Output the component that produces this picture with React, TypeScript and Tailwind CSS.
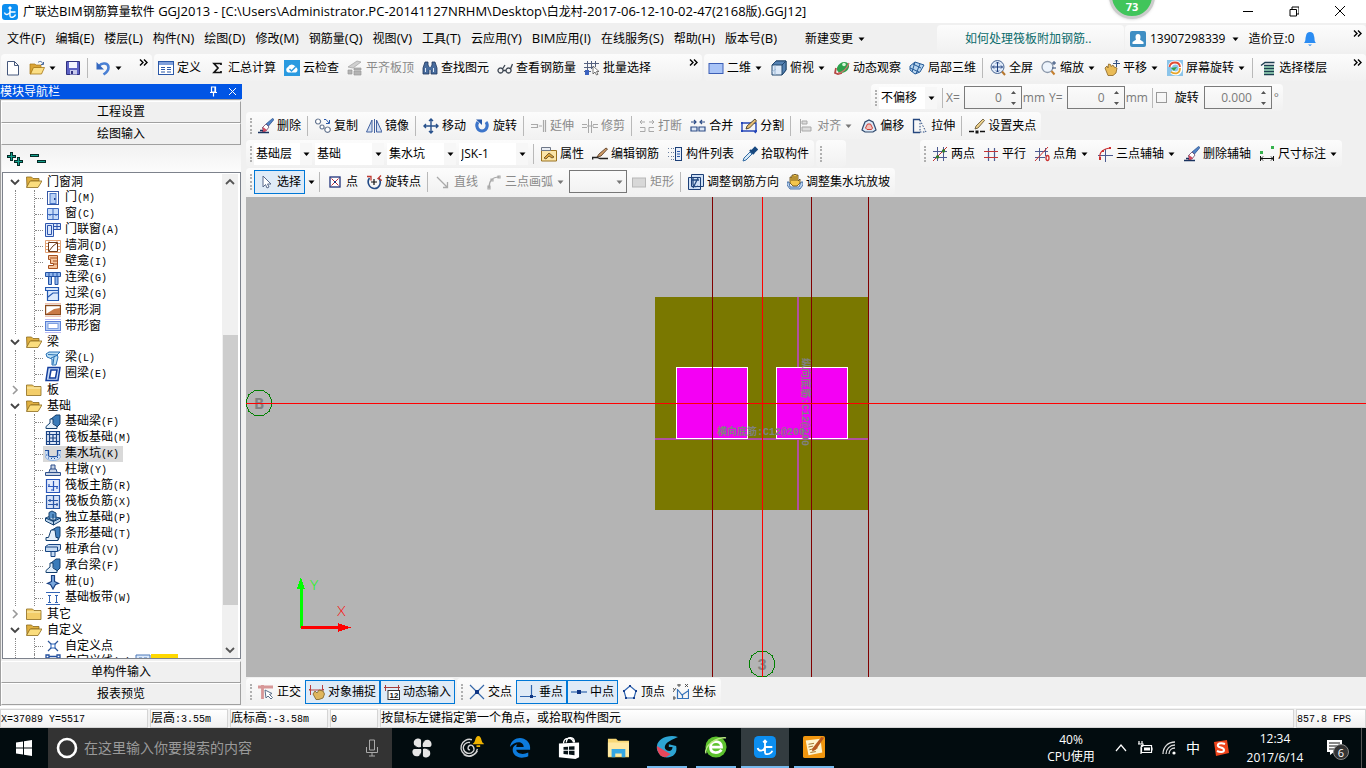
import type { ReactNode } from "react";
import { clsx } from "clsx";

const B = "#2a58a8";
const N = "#1c3f77";
const G = "#a9a9a9";

const icons: Record<string, ReactNode> = {
  app: (
    <>
      <rect width="16" height="16" rx="3" fill="#0c8ef0" />
      <path d="M8 3v9.500M6.500 4.500L8 3l1.500 1.500M2.500 8.500c.5 3 4.500 2.500 5.500-.5h5.500M8 12.500c1.500 1.500 5 .5 5.500-2" fill="none" stroke="#fff" strokeWidth="1.400" />
    </>
  ),
  file: <path d="M2.500 1.500h7l4 4v9.500h-11zM9.500 1.500v4h4" fill="#fff" stroke="#46587c" />,
  open: (
    <>
      <path d="M1 4h5l1 1h5v3H5l-3 6H1z" fill="#d9a436" stroke="#a67614" strokeWidth=".7" />
      <path d="M4.500 7.500h11L12.500 14h-11z" fill="#fbdf86" stroke="#a67614" strokeWidth=".8" />
      <path d="M9 2.500c2-2 4-1 5 1.500M14.500 2v2.500H12" fill="none" stroke="#47689c" />
    </>
  ),
  save: (
    <>
      <path d="M1.500 1.500h13v13h-13z" fill="#5d62c4" stroke="#30317f" />
      <path d="M4 2h8v6H4z" fill="#f3f4ff" />
      <path d="M5 10h7v4.500H5z" fill="#c8caec" />
      <path d="M6 11h2v3H6z" fill="#30317f" />
    </>
  ),
  undo: (
    <>
      <path d="M4 6C7 2 13.500 3 13.500 7.500c0 3-2 5-5 7" fill="none" stroke="#4a80d4" strokeWidth="2.600" />
      <path d="M1.500 2v7.500H9z" fill="#3468c0" />
    </>
  ),
  define: (
    <>
      <rect x=".5" y="1.500" width="15" height="13" fill="#fff" stroke={B} />
      <path d="M1 2h14v3H1z" fill="#7e9fdb" />
      <path d="M3 7.500h4M3 9.500h4M3 12h4M9 7.500h4M9 9.500h4M9 12h4" stroke={B} />
    </>
  ),
  sigma: <path d="M12 5V3.500H5L9 8l-4 4.500h7V11" fill="none" stroke="#111" strokeWidth="1.700" />,
  cloud: (
    <>
      <rect width="16" height="16" fill="#2a9ae0" />
      <path d="M4 12.500a3 3 0 0 1 0-5.500 4 4 0 0 1 7.500 0 3 3 0 0 1 .5 5.500z" fill="#fff" />
      <path d="M5.500 9l2 2 4-4" fill="none" stroke="#2a9ae0" strokeWidth="1.500" />
    </>
  ),
  align: (
    <>
      <path d="M1 7l9-6 4 1-8 6z" fill="#d0d0d0" stroke="#a0a0a0" strokeWidth=".7" />
      <path d="M1 10h4v4H1zM7 8h7v2H7zM7 11h7v4H7z" fill="#b4b4b4" stroke="#9a9a9a" strokeWidth=".7" />
    </>
  ),
  find: (
    <>
      <path d="M3 2h3v3l1 2v7H1V8zM10 2h3l2 6v6H9V7l1-2z" fill="#486c9d" stroke="#1e355c" strokeWidth=".8" />
      <path d="M6 7h4v3H6z" fill="#486c9d" />
      <path d="M3.500 8v4M11.500 8v4" stroke="#dbe6f5" />
    </>
  ),
  glasses: <path d="M3.500 8a2.500 2.500 0 1 0 .1 0M11.500 8a2.500 2.500 0 1 0 .1 0M6 10.500h3M5.500 9L8 5M13.500 9L15.500 4" fill="none" stroke="#3b4450" strokeWidth="1.300" />,
  batch: (
    <>
      <path d="M0 3.500h15M0 7.500h10M3.500 1v14M7.500 1v8M11.500 1v6M0 11.500h7" stroke="#54607e" />
      <path d="M1 10h4v5H1z" fill="#3b62bf" />
      <path d="M9 6v8l2-2 1.500 3 1.500-.7-1.500-2.800H15z" fill="#fff" stroke="#444" strokeWidth=".7" />
    </>
  ),
  plan: <rect x="1" y="3.500" width="14" height="10" fill="#a9c4f7" stroke="#3c5fb6" />,
  cube: (
    <>
      <path d="M1 5l4-4h10v9l-4 5H1z" fill="#dce9f8" stroke="#21466d" />
      <path d="M1 5l4-4h10l-4 4zM11 5l4-4v9l-4 5z" fill="#5481b2" stroke="#21466d" />
      <path d="M4 5v10M1 12l4-3" stroke="#9bb6d3" />
    </>
  ),
  orbit: (
    <>
      <path d="M2 8l-1 5 3 1 4-1" fill="none" stroke="#b54a45" strokeWidth="1.800" />
      <ellipse cx="9" cy="7.500" rx="6.500" ry="5" transform="rotate(-35 9 7.500)" fill="#2da14b" />
      <circle cx="10" cy="4.500" r="1.800" fill="#d5f5d6" />
      <path d="M4 13c4 0 9-4 11-10" fill="none" stroke="#c9746c" strokeWidth="1.300" />
    </>
  ),
  local3d: (
    <>
      <path d="M1 6l5-4 9 3-4 7-5 2-5-4z" fill="#b8d5ef" stroke="#255b98" />
      <path d="M4 4l8 4M1 8l9 4M6 2L3 12M11 4L7 14" stroke="#255b98" fill="none" />
    </>
  ),
  full: (
    <>
      <circle cx="7.500" cy="7" r="6.500" fill="#dfeaf9" stroke="#4a6794" />
      <path d="M7.500 2v10M2.500 7h10M6 3.500L7.500 2 9 3.500M6 10.500L7.500 12 9 10.500M4 5.500L2.500 7 4 8.500M11 5.500L12.500 7 11 8.500" fill="none" stroke="#1e3f7d" />
      <path d="M12 11.500l3 3.500" stroke="#b5762c" strokeWidth="2" />
    </>
  ),
  zoom: (
    <>
      <circle cx="6.500" cy="7" r="5.500" fill="#edf4fc" stroke="#8b98aa" strokeWidth="1.300" />
      <path d="M10.500 11l3 3.500" stroke="#c5802f" strokeWidth="2" />
      <path d="M11 3h4M13 1v4M11 8h4" stroke="#2d4976" />
    </>
  ),
  pan: (
    <>
      <path d="M1 8l2-2 1 2 .5-4 2 .500.5 2L9 5l1 2 3 1-1 5-3 2.500H4z" fill="#e9bb57" stroke="#8a6524" strokeWidth=".8" />
      <path d="M12.500 0v7M9 3.500h7M11 1.500L12.500 0 14 1.500" stroke="#33517f" fill="none" />
    </>
  ),
  rotateScreen: (
    <>
      <rect width="16" height="16" fill="#8cc5ea" />
      <path d="M3 7c1-6 10-6 10.500 0s-4 8-9 5" fill="none" stroke="#fff" strokeWidth="4" />
      <path d="M2.500 7c1-6 10-6 10.500 0" fill="none" stroke="#e04b32" strokeWidth="1.800" />
      <path d="M13 8c0 5-4 7-9 4" fill="none" stroke="#e7a52b" strokeWidth="1.800" />
      <path d="M4 8l6-1-3 4z" fill="#37a445" />
    </>
  ),
  floors: (
    <>
      <path d="M1 5.500L5 2.500h9.500M4 14.500h10M4 11.500h10M4 8.500h10M4 5.500h10" fill="none" stroke="#1d3e51" strokeWidth="1.300" />
      <path d="M4 7h10M4 10h10M4 13h10" stroke="#3ca578" />
    </>
  ),
  erase: (
    <>
      <path d="M14.500.5l1.500 1L10.500 8 8 6z" fill="#5183c7" stroke="#234a86" strokeWidth=".7" />
      <path d="M8 6l3 3-3 4-4-3z" fill="#fff" stroke="#65446a" strokeWidth=".8" />
      <path d="M5 9l4 3-2 2H4z" fill="#d04c61" />
      <path d="M0 14.500h11M2 12.500h3" stroke="#1a335f" strokeWidth="1.300" />
    </>
  ),
  copy: (
    <>
      <path d="M3 1a2.500 2.500 0 1 0 .1 0M7 7a2 2 0 1 0 .1 0M12.500 9a2.700 2.700 0 1 0 .1 0" fill="#fff" stroke="#65758f" strokeWidth="1.200" />
      <path d="M9 1.500h2l3 3.500M14.500 2v3.500H11" fill="none" stroke={B} />
    </>
  ),
  mirror: <path d="M6 2v12H.500zM10.500 2v12h5.500zM8.500 1v14" fill="#d5e1f4" stroke="#4362a0" />,
  move: <path d="M8 1v14M1 8h14M6 3l2-2 2 2M6 13l2 2 2-2M3 6L1 8l2 2M13 6l2 2-2 2" fill="none" stroke="#27508b" strokeWidth="1.400" />,
  rotate: (
    <>
      <path d="M4 4C1 8 4 13 8 13s7-5 4-9" fill="none" stroke="#3d75ca" strokeWidth="3" />
      <path d="M2 1.500h6v5.500z" fill="#2557a9" />
    </>
  ),
  extend: <path d="M0 6.500h6M0 9.500h6M6.500 6v4M8 8h3M12.500 2v12M14.500 2v12" fill="none" stroke={G} strokeWidth="1.200" />,
  trim: <path d="M0 6.500h5M0 9.500h5M11 6.500h5M11 9.500h5M6.500 1v14M9.500 3v12M5 8h7" fill="none" stroke={G} />,
  breakIt: <path d="M1 4h5M3 2L1 4l2 2M15 4h-5M13 2l2 2-2 2M1 9.500h5v4H1M15 9.500h-5v4h5" fill="none" stroke={G} />,
  merge: <path d="M1 4h5M4 2l2 2-2 2M15 4h-5M12 2l-2 2 2 2M1 9h6v4H1zM9 9h6v4H9z" fill="#dce6f5" stroke="#2e4d86" strokeWidth="1.200" />,
  split: (
    <>
      <path d="M1 5v8h14V5zM1 5h2M13 13l2 2" fill="none" stroke="#2446b8" strokeWidth="1.400" />
      <path d="M5 11l1-3 8-7 1.500 2-7 7z" fill="#e5bd73" stroke="#30291b" strokeWidth=".8" />
      <path d="M0 4h2v2H0zM0 12h2v2H0zM14 12h2v2h-2z" fill="#2446b8" />
    </>
  ),
  alignTo: <path d="M2.500 1v14M4 3h5v3H4zM4 9h9v4H4z" fill="#ddd" stroke={G} />,
  offset: (
    <>
      <path d="M2 9l2-5 4-2 4 2 2 5 1 3-3 2H4l-3-2z" fill="#dce9f7" stroke="#2f486d" strokeWidth="1.200" />
      <path d="M4.500 10l2-4h3l2 4-1 1.500H6z" fill="#f3c1bc" stroke="#d04035" />
    </>
  ),
  stretch: (
    <>
      <path d="M8 1.500H1.500v13H8" fill="none" stroke="#25477e" strokeWidth="1.300" />
      <path d="M8 2l6 12H8z" fill="none" stroke="#25477e" strokeDasharray="1.500 1.500" />
    </>
  ),
  grip: (
    <>
      <path d="M0 13.500h5M11 13.500h5" stroke="#111" strokeWidth="1.300" />
      <path d="M6.500 12.500h3v3h-3z" fill="#111" />
      <path d="M6 11l1-3 7-7 1.500 1.500L9 10z" fill="#ecd08b" stroke="#5c4b28" strokeWidth=".8" />
    </>
  ),
  props: (
    <>
      <path d="M.5 4.500h15V15H.5z" fill="#fbe5a7" stroke="#9a7220" />
      <path d="M.5 1.500h9v3h-9z" fill="#e8ecf2" stroke="#6e7787" />
      <path d="M3 12l5-5 5 4-2 1-3-2-3 3z" fill="#dca43a" stroke="#5e451c" strokeWidth=".8" />
    </>
  ),
  rebar: (
    <>
      <path d="M0 11.500h5l3 1h8M0 11.500l1 2" fill="none" stroke="#222" strokeWidth="1.300" />
      <path d="M5 11l2-3 7-6 1.500 1L9 10z" fill="#d09d68" stroke="#4d301b" strokeWidth=".8" />
    </>
  ),
  list: (
    <>
      <rect x="8.500" y="1.500" width="6" height="13" fill="#e5edf9" stroke={N} />
      <path d="M10 5.500h3M10 8h3M10 10.500h3" stroke={B} />
      <path d="M1 2.500h2M1 6.500h2M1 10.500h2M4 2.500h3M4 6.500h3M4 10.500h3M4 13.500h3" stroke="#6a7f9f" strokeDasharray="1 1" />
    </>
  ),
  picker: (
    <>
      <path d="M8 4l4 4M9.500 5.500L13 2l1.500 1.500-3.500 3.500" fill="#1f5ca6" stroke="#17487f" strokeWidth="2.400" />
      <path d="M8 6l2 2-6 6-3 1 1-3z" fill="#d7e9f7" stroke="#336ba3" />
    </>
  ),
  twoPoint: (
    <>
      <path d="M5.500 1v14M11.500 1v14M1 5.500h14M1 11.500h14" stroke="#4c5a90" />
      <path d="M1 15L15 1" stroke="#c32f2f" />
      <circle cx="5.500" cy="11" r="1.700" fill="#327c2c" />
      <circle cx="11.500" cy="5" r="1.700" fill="#327c2c" />
    </>
  ),
  parallel: (
    <>
      <path d="M5.500 2v13M11.500 2v13" stroke="#4c5a90" strokeWidth="1.200" />
      <path d="M1 5.500h14M1 11.500h14" stroke="#c33535" strokeWidth="1.200" />
    </>
  ),
  pointAngle: (
    <>
      <path d="M5.500 2v13M11.500 2v8M1 5.500h13M1 11.500h10" stroke="#4c5a90" />
      <path d="M1 15L14 1" stroke="#c93030" />
      <ellipse cx="13.500" cy="12" rx="1.500" ry="2.500" fill="none" stroke="#c93030" strokeWidth="1.300" />
    </>
  ),
  threePoint: (
    <>
      <path d="M8.500 3v13M1 9.500h15" stroke="#4c5a90" />
      <path d="M3 12C2 6 6 3 13 2" fill="none" stroke="#cf3030" strokeWidth="1.200" />
      <path d="M2 11h2v3H2zM5 4h2v2H5zM12 1h2v2h-2z" fill="#cf3030" />
    </>
  ),
  dimension: (
    <>
      <path d="M1 5h3v3H1zM12 0h3v3h-3z" fill="#36b14c" />
      <path d="M1.500 10v5M14.500 10v5M2 12.500h12M4 10.500l-2 2 2 2M12 10.500l2 2-2 2" fill="none" stroke="#111" />
    </>
  ),
  select: <path d="M5 2v11l2.500-2.500L9 14l2-1-1.500-3H13z" fill="#fff" stroke="#58698a" />,
  point: (
    <>
      <rect x="3" y="3" width="10" height="10" fill="#fff" stroke="#1f327a" strokeWidth="1.300" />
      <path d="M4.500 4.500l7 7M11.500 4.500l-7 7" stroke="#c22f3a" />
      <path d="M7 7h2v2H7z" fill="#1f327a" />
    </>
  ),
  rotPoint: (
    <>
      <path d="M3.500 4c-3 4-.5 10 4.500 10.500S16 9 13 4" fill="none" stroke="#234b87" strokeWidth="1.600" />
      <path d="M1 2.500h4v4M15 1.500l-3 3 4 2" fill="none" stroke="#c03b32" strokeWidth="1.300" />
      <path d="M8 5v6M5 8h6" stroke="#111" strokeWidth="1.200" />
    </>
  ),
  line: <path d="M2 3l10 10M12.500 8v5.500H8" fill="none" stroke={G} strokeWidth="1.300" />,
  arc: <path d="M3 14C3 7 6 3 13 3M2 12h2v3H2zM5 5h2v2H5zM12 2h2v2h-2z" fill="none" stroke={G} strokeWidth="1.200" />,
  rectangle: <rect x="1.500" y="4" width="13" height="9" fill="#d8d8d8" stroke="#b8b8b8" />,
  rebarDir: (
    <>
      <path d="M3.500.500h12v12h-12zM.500 3.500h12v12H.500z" fill="#cfe0f5" stroke={N} />
      <path d="M3 6h8M5 4v6c0 3 3 3 5 2M10 4L5 14" fill="none" stroke="#244b83" strokeWidth="1.300" />
    </>
  ),
  slope: (
    <>
      <path d="M0 8h2l1 5h9l2-5h2v3l-3 4H3l-3-4z" fill="#bcd4ef" stroke="#2a5998" strokeWidth=".8" />
      <path d="M3 9V3h2V1h2V.5h2V1h2v6l2-2v4l-3 3H6z" fill="#f3c64d" stroke="#5b4310" strokeWidth=".8" />
      <path d="M5 3v4M7 2v5M9 2v5" stroke="#5b4310" strokeWidth=".8" />
    </>
  ),
  ortho: (
    <>
      <path d="M0 3h15M4.500 1v14" stroke="#d79797" strokeWidth="2.800" />
      <path d="M7 6l1 8 2-2 3 3 1.500-1.500-3-3 2.500-1z" fill="#fff" stroke="#5b6f88" />
    </>
  ),
  snap: (
    <>
      <path d="M1.500 1v10M13.500 1v5M0 6h15M0 6l2-2M15 6l-2-2" stroke="#b94040" />
      <path d="M4 10l2-3 2 2 2-3 4 1 1.500 3-1.500 4-4 1.500H7z" fill="#dfb65d" stroke="#7a6027" strokeWidth=".8" />
    </>
  ),
  dynInput: (
    <>
      <path d="M0 3.500h16M1.500 1v6M14.500 1v6" stroke="#a63c3c" />
      <rect x="4" y="6.500" width="11.500" height="9" fill="#fff" stroke="#333" />
      <text x="5.500" y="14" fontSize="8" fontWeight="bold" fontFamily="Liberation Sans" fill="#111">12</text>
    </>
  ),
  cross: (
    <>
      <path d="M1 1l14 14M15 1L1 15" stroke="#3667a9" strokeWidth="1.200" />
      <path d="M6 6h4v4H6z" fill="#0f3684" />
    </>
  ),
  perp: (
    <>
      <path d="M0 12.500h16M11.500 1v12" stroke="#2f65ad" strokeWidth="1.200" />
      <path d="M10 11h3v3h-3z" fill="#0f3684" />
    </>
  ),
  mid: (
    <>
      <path d="M0 8h16" stroke="#2f65ad" strokeWidth="1.200" />
      <path d="M6 6h4v4H6z" fill="#0f3684" />
    </>
  ),
  vertex: (
    <>
      <path d="M8 2L2 7l2 7h8l2-7z" fill="#fff" stroke="#3166b2" strokeWidth="1.200" />
      <path d="M7 1h2v2H7zM1 6h2v2H1zM13 6h2v2h-2zM3 13h2v2H3zM11 13h2v2h-2z" fill="#173f8e" />
    </>
  ),
  coord: (
    <>
      <path d="M4.500 5v9.500h11M15.500 5v10M5 6l4 5 6-4M9.500 11v4" fill="none" stroke="#3472b9" strokeWidth="1.200" />
      <path d="M5 0h2v2H5zM12 0l3 3M15 0l-3 3M0 4l1.500 2M3 4L0 8M0 13h2v2H0z" fill="none" stroke="#444" strokeWidth=".9" />
    </>
  ),
  folderOpen: (
    <>
      <path d="M.5 3h5l1.500 1.500h6V7H5l-4 6z" fill="#e0b040" stroke="#8c6a1c" strokeWidth=".8" />
      <path d="M4 7h12l-4 6.500H.5z" fill="#fbdd7d" stroke="#8c6a1c" strokeWidth=".8" />
    </>
  ),
  folder: (
    <>
      <path d="M.5 3h6L8 4.500h7v9H.5z" fill="#f3cd69" stroke="#8c6a1c" strokeWidth=".8" />
      <path d="M1 6h13.500" stroke="#fdf0b9" />
    </>
  ),
  door: (
    <>
      <rect x="2.500" y="1.500" width="11" height="13" fill="#fff" stroke="#3558a5" />
      <rect x="5" y="3.500" width="6" height="10" fill="#b9d1f6" stroke="#4b78c8" />
      <path d="M9 8h1.500v2H9z" fill="#1a3f8f" />
    </>
  ),
  window: <path d="M2.500 2.500h11v11h-11zM8 2v12M2 8.500h12M5 8v2M11 8v2" fill="#c7dcfa" stroke="#3c68bd" />,
  doorWin: <path d="M.5 1.500h8v13h-8zM2.500 3.500h4v9h-4zM8.500 1.500h7v6h-7zM12 1.500v6M8.500 4.500h7" fill="#dae7fc" stroke="#2d55ad" />,
  wallHole: (
    <>
      <path d="M.5 2.500h15v12H.5zM.5 5.500h15M.5 8.500h15M.5 11.500h15M4 2v12M12 2v12" fill="#fff" stroke="#e3a173" />
      <path d="M3.500 4.500h9v9h-9z" fill="#fff" stroke="#6e3a18" />
      <path d="M4 13l4-5 4-3" fill="none" stroke="#6e3a18" />
    </>
  ),
  niche: <path d="M3.500 1.500h9v13h-9v-3h5v-2h-3v-4h-2zM5 4h7M8 7h4M8 10h4" fill="#f7c59c" stroke="#a5501f" />,
  linkBeam: <path d="M.5 2.500h15v4H.5zM3.500 6.500h3v8h-3zM10 6.500h3v8h-3zM4 3v3M8 3v3M12 3v3" fill="#8fb6ee" stroke="#2352a4" />,
  lintel: <path d="M.5 1.500h13v3H.500zM2.500 4.500h11v10h-11zM3 11l5-4h5" fill="#dbe9fc" stroke="#2458b0" strokeWidth="1.200" />,
  stripHole: (
    <>
      <rect x=".5" y="3.500" width="15" height="9" fill="#fff" stroke="#8a4a1d" strokeWidth="1.400" />
      <path d="M1 12l8-5 6-1v6z" fill="#c87a48" />
      <path d="M0 1.500h16M0 14.500h16" stroke="#f0c3b4" />
    </>
  ),
  stripWin: (
    <>
      <path d="M0 1.500h16M0 14.500h16" stroke="#b9b9f2" />
      <rect x=".5" y="3.500" width="15" height="9" fill="#b8cff5" stroke="#5a80d5" />
      <rect x="3" y="5.500" width="10" height="5" fill="#fff" stroke="#7fa0e2" />
    </>
  ),
  beam: <path d="M1 4l3-2h11l-3 3 1 2-2 8H7V9L2 7zM3 4.500l9 .5M6 8l7-3M9 7l-1 7" fill="#bde1f6" stroke="#276fb4" />,
  ringBeam: <path d="M3 1.500h12L13 14.500H1zM6 4h6l-1.500 8H4.500z" fill="#c9dcf8" stroke="#143f9d" strokeWidth="1.500" fillRule="evenodd" />,
  baseBeam: (
    <>
      <path d="M6 5l5-4h4v9l-4 4" fill="#3a7bb9" stroke="#14406f" />
      <path d="M1 14.500v-2L5 9V5h3v5l4 2.500v2z" fill="#e2effb" stroke="#14406f" />
    </>
  ),
  raft: <path d="M1.500 1.500h13v13h-13zM4.500 1v14M11.500 1v14M1 4.500h14M1 11.500h14M8 4v8M4 8h8" fill="#dfe9f8" stroke="#1b4486" strokeWidth="1.200" />,
  sump: (
    <>
      <path d="M0 4.500h3v5c0 2 10 2 10 0v-5h3v4c0 4-3 6-8 6s-8-2-8-6z" fill="#d3e3f6" stroke="#8db0de" />
      <path d="M0 4.500h3.500v5c0 1.500 9 1.500 9 0v-5H16" fill="none" stroke="#1e4fa0" strokeWidth="1.200" />
      <path d="M1 9h1M3 12h1M6 12.500h1M9 12.500h1M12 11.500h1M14 9h1" stroke="#1e4fa0" />
    </>
  ),
  pier: <path d="M.5 10.500h15v3H.500zM4 10l1-3h6l1 3M6 7V3h4v4" fill="#c8d3e4" stroke="#2c4f8c" />,
  mainBar: <path d="M1.500 1.500h13v13h-13zM3 8.500h10M8.500 3v10M4 6v3M12 8v3M6 12h3" fill="#e4ecfc" stroke="#2a57bb" strokeWidth="1.200" />,
  negBar: <path d="M1.500 1.500h13v13h-13zM3 6.500h10M3 10.500h10M8.500 2v12M5 5v3M12 9v3" fill="#d6e2f8" stroke="#2a57a6" strokeWidth="1.200" />,
  isolated: (
    <>
      <path d="M.5 8l5-2 10 2v3l-7 4-8-4z" fill="#b8d3ec" stroke="#14406f" />
      <path d="M4 8V2.500L7 1l4 2v6l-3 2zM.500 8l8 3.500 7-3.500M8.500 11v4M8 4v7" fill="#5892c9" stroke="#14406f" />
    </>
  ),
  stripBase: (
    <>
      <path d="M7 4l5-3h3v9l-2 4" fill="#3f7fbe" stroke="#14406f" />
      <path d="M1 14.500v-3h2.500L6 4h4l1 7.500h2v3z" fill="#e6f0fa" stroke="#14406f" />
    </>
  ),
  pileCap: <path d="M.5 4.500l3-2h12v5l-3 2H.500zM6 9.500h4v5H6zM.5 5h12v4" fill="#c7dcf3" stroke="#164583" />,
  pile: <path d="M6.500 1.500h3v6l4 2-3 1-2.500 4.500-2.500-4.500-3-1 4-2z" fill="#7ba8dc" stroke="#173f82" strokeWidth="1.200" />,
  strip: <path d="M1 2.500h14M1 14.500h14M4.500 5v8M11.500 5v8M3 5.500h3M10 5.500h3M3 12.500h3M10 12.500h3" stroke="#3566b5" fill="none" />,
  customPoint: (
    <>
      <path d="M3 3l10 10M13 3L3 13" stroke="#2b5598" strokeWidth="1.200" />
      <path d="M6 6h4v4H6z" fill="#fff" stroke="#2b62b8" />
    </>
  ),
  customLine: <path d="M1 1h3v3H1zM12 1h3v3h-3zM4 2.500h8" fill="#fff" stroke="#24509f" strokeWidth="1.300" />,
};

function Icon({ name, className = "size-4" }: { name: string; className?: string }) {
  return (
    <svg viewBox="0 0 16 16" className={clsx("shrink-0", className)} aria-hidden="true">
      {icons[name]}
    </svg>
  );
}

function Caret({ gray }: { gray?: boolean }) {
  return (
    <svg viewBox="0 0 9 8" className="h-2 w-[9px] shrink-0" aria-hidden="true">
      <path d="M1.500 2.500h6l-3 3.500z" fill={gray ? "#777" : "#000"} />
    </svg>
  );
}

function More() {
  return (
    <button aria-label="更多" className="mr-1 ml-auto flex h-4 shrink-0 items-center self-start">
      <svg viewBox="0 0 9 7" className="h-[7px] w-[9px]">
        <path d="M1 .5l3 3-3 3M5 .5l3 3-3 3" fill="none" stroke="#000" strokeWidth="1.400" />
      </svg>
    </button>
  );
}

function Sep() {
  return <div className="mr-[3px] ml-[2px] h-5 w-px shrink-0 bg-[#b9b9b9]" />;
}

type ToolProps = { icon: string; label?: string; caret?: boolean; off?: boolean; on?: boolean };

function Tool({ icon, label, caret, off, on }: ToolProps) {
  return (
    <button
      disabled={off}
      aria-label={label ?? icon}
      className={clsx(
        "flex h-6 shrink-0 items-center gap-[3px] whitespace-nowrap",
        on ? "border border-[#0078d7] bg-[#dfebf7] px-[3px]" : "px-1",
        off && "text-[#8a8a8a]"
      )}
    >
      <Icon name={icon} />
      {label && <span>{label}</span>}
      {caret && <Caret gray={off} />}
    </button>
  );
}

function Toolbar({ children, className, grip = true }: { children?: ReactNode; className?: string; grip?: boolean }) {
  return (
    <div
      role="toolbar"
      className={clsx("flex h-[27px] items-center rounded-sm bg-linear-to-b from-[#fcfcfc] to-[#f1f1f1]", grip && "pl-1", className)}
    >
      {grip && <div className="mr-0.5 h-4 w-0 shrink-0 border-l-2 border-dotted border-[#b0b0b0]" />}
      {children}
    </div>
  );
}

function Combo({ label, value, className }: { label: string; value: string; className: string }) {
  return (
    <div className={clsx("relative mr-[3px] h-[22px] shrink-0 bg-white", className)}>
      <select aria-label={label} className="size-full appearance-none bg-transparent pl-0.5">
        <option>{value}</option>
      </select>
      <div className="pointer-events-none absolute inset-y-0 right-0 flex w-3 items-center justify-center bg-[#f7f7f7]">
        <Caret />
      </div>
    </div>
  );
}

function NumberBox({ label, value, className }: { label: string; value: string; className: string }) {
  return (
    <div className={clsx("flex h-[23px] shrink-0 items-center border border-[#7a7a7a] pr-1", className)}>
      <input aria-label={label} defaultValue={value} className="w-full min-w-0 pr-2 text-right text-[#7a7a7a] outline-none" />
      <svg viewBox="0 0 7 16" className="h-4 w-[7px] shrink-0">
        <path d="M1 4h5L3.500 1zM1 12h5l-2.500 3z" fill="#555" />
      </svg>
    </div>
  );
}

/* latin runs get their own size and face beside the CJK glyphs */
function Mixed({ text, latin }: { text: string; latin: string }) {
  return (
    <>
      {text.split(/([\x20-\x7e]+)/).map((part, i) =>
        i % 2 ? (
          <span key={i} className={clsx("whitespace-pre", latin)}>{part}</span>
        ) : (
          part
        )
      )}
    </>
  );
}

const mono = "font-['Liberation_Mono',monospace] text-[10px]";
const ui = "text-[13px]";

const menus = ["文件(F)", "编辑(E)", "楼层(L)", "构件(N)", "绘图(D)", "修改(M)", "钢筋量(Q)", "视图(V)", "工具(T)", "云应用(Y)", "BIM应用(I)", "在线服务(S)", "帮助(H)", "版本号(B)"];

type Group = { label: string; open: boolean; items: [string, string][] };

const tree: Group[] = [
  {
    label: "门窗洞",
    open: true,
    items: [
      ["door", "门(M)"],
      ["window", "窗(C)"],
      ["doorWin", "门联窗(A)"],
      ["wallHole", "墙洞(D)"],
      ["niche", "壁龛(I)"],
      ["linkBeam", "连梁(G)"],
      ["lintel", "过梁(G)"],
      ["stripHole", "带形洞"],
      ["stripWin", "带形窗"],
    ],
  },
  { label: "梁", open: true, items: [["beam", "梁(L)"], ["ringBeam", "圈梁(E)"]] },
  { label: "板", open: false, items: [] },
  {
    label: "基础",
    open: true,
    items: [
      ["baseBeam", "基础梁(F)"],
      ["raft", "筏板基础(M)"],
      ["sump", "集水坑(K)"],
      ["pier", "柱墩(Y)"],
      ["mainBar", "筏板主筋(R)"],
      ["negBar", "筏板负筋(X)"],
      ["isolated", "独立基础(P)"],
      ["stripBase", "条形基础(T)"],
      ["pileCap", "桩承台(V)"],
      ["baseBeam", "承台梁(F)"],
      ["pile", "桩(U)"],
      ["strip", "基础板带(W)"],
    ],
  },
  { label: "其它", open: false, items: [] },
  { label: "自定义", open: true, items: [["customPoint", "自定义点"], ["customLine", "自定义线(X)"]] },
];

function TreeGroup({ group }: { group: Group }) {
  return (
    <li>
      <div className="flex h-4 items-center">
        <button aria-label={group.label} className="mr-[5px] ml-[6px] w-3">
          <svg viewBox="0 0 12 12" className="size-3">
            {group.open ? (
              <path d="M2 4l4 4 4-4" fill="none" stroke="#444" strokeWidth="1.800" />
            ) : (
              <path d="M4 2l4 4-4 4" fill="none" stroke="#999" strokeWidth="1.600" />
            )}
          </svg>
        </button>
        <Icon name={group.open ? "folderOpen" : "folder"} />
        <span className="ml-[5px]">{group.label}</span>
      </div>
      {group.items.length > 0 && (
        <ul className="ml-3 border-l border-dotted border-[#888] pl-[18px]">
          {group.items.map(([icon, label]) => (
            <li key={label} className="flex h-4 items-center border-l border-dotted border-[#888]">
              <div className="w-2 border-t border-dotted border-[#888]" />
              <div className={clsx("flex h-4 items-center gap-1 pr-1 pl-0.5", label === "集水坑(K)" && "bg-[#d9d9d9]")}>
                <Icon name={icon} />
                <span className="leading-[18px] whitespace-nowrap"><Mixed text={label} latin={mono} /></span>
              </div>
              {icon === "customLine" && (
                <div className="flex items-center">
                  <svg viewBox="0 0 16 16" className="size-4"><path d="M1 1h14v14H1zM4 4h3v8H4zM9 4h3v8H9z" fill="#dbe9fb" stroke="#4d79b8" /></svg>
                  <span className="bg-[#ffd800] px-0.5 text-[10px] leading-4 font-bold text-[#222]">NEW</span>
                </div>
              )}
            </li>
          ))}
        </ul>
      )}
    </li>
  );
}

function PanelButton({ children }: { children: ReactNode }) {
  return <button className="h-[22px] w-full shrink-0 border border-[#a0a0a0] border-t-[#fff] border-l-[#fff] bg-[#f0f0f0]">{children}</button>;
}

function Navigator() {
  return (
    <aside className="flex w-[242px] shrink-0 flex-col pt-0.5">
      <div className="flex h-[15px] shrink-0 items-center bg-[#0055e5] text-white">
        <span className="mr-auto leading-none">模块导航栏</span>
        <button aria-label="固定" className="mr-[10px]">
          <svg viewBox="0 0 9 11" className="h-[11px] w-[9px]"><path d="M2.500 1h4v5h-4zM1 6.500h7M4.500 7v3.500M6 1v5" fill="none" stroke="#fff" strokeWidth="1.200" /></svg>
        </button>
        <button aria-label="关闭" className="mr-[5px]">
          <svg viewBox="0 0 9 9" className="size-[9px]"><path d="M1 1l7 7M8 1L1 8" stroke="#fff" /></svg>
        </button>
      </div>
      <div className="mr-px flex min-h-0 flex-1 flex-col border-t border-l border-[#a0a0a0] pt-px">
        <PanelButton>工程设置</PanelButton>
        <PanelButton>绘图输入</PanelButton>
        <div className="ml-px flex h-[27px] shrink-0 items-center bg-linear-to-b from-[#f1f1f1] to-[#fcfcfc]">
          <button aria-label="全部展开" className="ml-1">
            <svg viewBox="0 0 18 16" className="h-4 w-[18px]"><path d="M5.500 1v9M1 5.500h9M12.500 6v9M8 10.500h9" stroke="#052b26" strokeWidth="3" /><path d="M5.500 2v7M2 5.500h7M12.500 7v7M9 10.500h7" stroke="#13a08e" strokeWidth="1.200" /></svg>
          </button>
          <button aria-label="全部折叠" className="ml-[5px]">
            <svg viewBox="0 0 18 16" className="h-4 w-[18px]"><path d="M1 4.500h9M8 10.500h9" stroke="#052b26" strokeWidth="3" /><path d="M2 4.500h7M9 10.500h7" stroke="#13a08e" /></svg>
          </button>
        </div>
        <div className="ml-px flex min-h-0 flex-1 overflow-hidden border border-[#7d828c] bg-white pt-px pr-px">
          <ul className="min-w-0 flex-1 overflow-hidden">
            {tree.map((g) => (
              <TreeGroup key={g.label} group={g} />
            ))}
          </ul>
          <div className="mr-px flex w-4 shrink-0 flex-col items-center bg-[#f0f0f0]">
            <svg viewBox="0 0 10 8" className="my-1 h-2 w-[10px]"><path d="M1 6l4-4 4 4" fill="none" stroke="#555" strokeWidth="1.800" /></svg>
            <div className="h-[145px] shrink" />
            <div className="min-h-0 w-[15px] flex-1 bg-[#cdcdcd]" />
            <div className="h-[37px] shrink-0" />
            <svg viewBox="0 0 10 8" className="my-1 h-2 w-[10px]"><path d="M1 2l4 4 4-4" fill="none" stroke="#555" strokeWidth="1.800" /></svg>
          </div>
        </div>
        <div className="flex flex-col pt-0.5 pb-px">
          <PanelButton>单构件输入</PanelButton>
          <PanelButton>报表预览</PanelButton>
        </div>
      </div>
    </aside>
  );
}

function Bubble({ x, y, text }: { x: number; y: number; text: string }) {
  return (
    <g transform={`translate(${x} ${y})`}>
      <path d="M-4-12.500h8l6 4 2.500 6v5l-2.500 6-6 4h-8l-6-4-2.500-6v-5l2.500-6z" fill="none" stroke="#008000" />
      <text y="6" textAnchor="middle" fontSize="16" fontWeight="bold" fill="#808080" fontFamily="'Liberation Mono', monospace">{text}</text>
    </g>
  );
}

function Canvas() {
  return (
    <div className="min-h-0 flex-1 overflow-hidden bg-[#b4b4b4]">
      <svg className="block size-full" fontFamily="'Liberation Mono', 'Noto Sans CJK SC', monospace" shapeRendering="crispEdges">
        <rect x="409" y="100" width="213" height="213" fill="#7a7800" />
        <path d="M409 242h213M552 100v213" stroke="#b150a0" strokeWidth="2" />
        <rect x="430.500" y="170.500" width="71" height="71" fill="#f400f4" stroke="#fff" />
        <rect x="530.500" y="170.500" width="71" height="71" fill="#f400f4" stroke="#fff" />
        <g fontSize="10" fontWeight="bold" fill="#808080">
          <text x="471" y="238">横向底筋:C12@200</text>
          <text transform="translate(556 161) rotate(90)">纵向底筋:C12@200</text>
        </g>
        <g stroke="#800000">
          <line x1="466.500" x2="466.500" y1="0" y2="100%" />
          <line x1="565.500" x2="565.500" y1="0" y2="100%" />
          <line x1="622.500" x2="622.500" y1="0" y2="100%" />
        </g>
        <Bubble x={13} y={206} text="B" />
        <Bubble x={516} y={467} text="3" />
        <line x1="516.500" x2="516.500" y1="0" y2="100%" stroke="#f00" />
        <line x1="0" x2="100%" y1="206.500" y2="206.500" stroke="#f00" />
        <path d="M55 431v-41" stroke="#0f0" strokeWidth="3" />
        <path d="M51 392l4-12 4 12z" fill="#0f0" />
        <path d="M55 430.500h38" stroke="#f00" strokeWidth="3" />
        <path d="M92 426l13 4.500-13 4.500z" fill="#f00" />
        <g fontSize="14" fontFamily="Lato, sans-serif" fontWeight="300">
          <text x="64" y="393" fill="#0f0">Y</text>
          <text x="91" y="419" fill="#f00">X</text>
        </g>
      </svg>
    </div>
  );
}

const status: [string, string][] = [
  ["X=37089 Y=5517", "w-[148px]"],
  ["层高:3.55m", "w-[78px]"],
  ["底标高:-3.58m", "w-[98px]"],
  ["0", "w-12"],
  ["按鼠标左键指定第一个角点，或拾取构件图元", "flex-1"],
  ["857.8 FPS", "w-[70px]"],
];

const tasks: { name: string; state?: "run" | "active"; art: ReactNode }[] = [
  {
    name: "搜狗",
    art: (
      <g fill="#e6e6e6">
        <path d="M11 11V4c0-4-8-3-8 2s4 6 8 5zM13 11h7c4 0 3-8-2-8s-6 4-5 8zM13 13v7c0 4 8 3 8-2s-4-6-8-5zM11 13H4c-4 0-3 8 2 8s6-4 5-8z" />
        <path d="M12 12c-1-3 0-6 3-8M12 12c3-1 6 0 8 3M12 12c1 3 0 6-3 8M12 12c-3 1-6 0-8-3" stroke="#000b0f" fill="none" />
      </g>
    ),
  },
  {
    name: "通知",
    art: (
      <>
        <path d="M13 3a9 9 0 1 0 6 10M11 6a6 6 0 1 0 3 10c3-3 0-8-3-7s-3 5 0 5M4 19c5 4 12 2 15-4" fill="none" stroke="#d5d5d5" strokeWidth="1.500" />
        <path d="M14 7c3 0 2-8 6-8s3 8 6 8v1H14zM18 9h4v2h-4z" fill="#f0b400" />
      </>
    ),
  },
  {
    name: "Edge",
    art: <path d="M1 11C2 4 7 1 12 1c6 0 11 5 11 10v3H8c0 4 7 6 13 3v4C12 25 4 21 4 14c0-3 2-5 5-6-1 1-1 2-1 3h8c0-7-10-7-15 0z" fill="#0d7bdc" />,
  },
  {
    name: "商店",
    art: (
      <>
        <path d="M1 7l22-1v16l-4 2-18-2z" fill="#fff" />
        <path d="M6 7c0-6 9-8 11-1M9 6c1-8 9-6 9 0" fill="none" stroke="#fff" strokeWidth="1.400" />
        <path d="M6 11l5-.5V14H6zM12 10.400l6-.4v4h-6zM6 15h5v4l-5-.5zM12 15h6v5l-6-.8z" fill="#061216" />
      </>
    ),
  },
  {
    name: "文件资源管理器",
    art: (
      <>
        <path d="M1 2h9l2 2h12v18H1z" fill="#f8d775" />
        <path d="M1 6h23v15H1z" fill="#ffe9a2" />
        <path d="M5 13h15v9h-4v-4H9v4H5z" fill="#35a7e3" />
      </>
    ),
  },
  {
    name: "广联达",
    state: "run",
    art: (
      <>
        <path d="M24 1C13-2 2 3 1 11c-1 5 3 10 7 12 9 2 16-3 14-12l-8-2v3h4c0 5-5 6-8 2-2-5 4-9 14-13z" fill="#2da5d4" />
        <path d="M1 11l15 9-5 3C5 24 1 18 1 11z" fill="#e8475b" />
      </>
    ),
  },
  {
    name: "360浏览器",
    state: "run",
    art: (
      <>
        <circle cx="12" cy="12" r="11.500" fill="#5dc22e" />
        <path d="M6 12h12c0-8-12-8-12 0s9 7 12 3" fill="none" stroke="#fff" strokeWidth="3" />
        <path d="M1 19C-1 10 13 1 23 2" fill="none" stroke="#bceb83" strokeWidth="1.500" />
      </>
    ),
  },
  {
    name: "GGJ2013",
    state: "active",
    art: (
      <>
        <rect width="24" height="24" rx="5" fill="#0c8ef0" />
        <path d="M12 5v14M10 7l2-2 2 2M4 13c1 4 7 4 8-1h8M12 19c3 2 7 0 8-3" fill="none" stroke="#fff" strokeWidth="2" />
      </>
    ),
  },
  {
    name: "记事",
    state: "run",
    art: (
      <>
        <rect width="24" height="24" rx="2" fill="#f0960f" />
        <path d="M3 5l16-2 2 15-15 3z" fill="#fff4cf" />
        <path d="M6 9l6-1M6 12l5-1M7 15l9-2M8 18l6-1" stroke="#9b6c25" />
        <path d="M10 14L20 1l3 1-9 13-4 2z" fill="#b75820" />
      </>
    ),
  },
];

function Taskbar() {
  return (
    <footer className="flex h-10 shrink-0 items-stretch bg-[#020c0f] text-white">
      <button aria-label="开始" className="flex w-12 shrink-0 items-center justify-center">
        <svg viewBox="0 0 16 16" className="size-4"><path d="M0 2.500l7-1v6H0zM8 1.300L16 0v7.500H8zM0 8.500h7v6l-7-1zM8 8.500h8V16l-8-1.300z" fill="#fff" /></svg>
      </button>
      <div className="flex w-[344px] shrink-0 items-center bg-[#333] pr-[13px] pl-2">
        <svg viewBox="0 0 22 22" className="mr-[6px] size-[22px]"><circle cx="11" cy="11" r="9" fill="none" stroke="#fff" strokeWidth="2.600" /></svg>
        <input aria-label="搜索" placeholder="在这里输入你要搜索的内容" className="min-w-0 flex-1 text-sm outline-none placeholder:text-[#9a9a9a]" />
        <svg viewBox="0 0 14 18" className="h-[18px] w-[14px]"><path d="M4.500 1h5v10h-5zM1.500 8v5.500h11V8M7 13.500V17M4 17h6" fill="none" stroke="#aaa" /></svg>
      </div>
      <div className="ml-1.5 flex gap-px">
        {tasks.map((t) => (
          <button key={t.name} aria-label={t.name} className={clsx("flex w-12 flex-col items-center", t.state === "active" && "bg-[#333c40]")}>
            <svg viewBox="0 0 24 24" className="my-auto size-[22px] overflow-visible">{t.art}</svg>
            {t.state && <span className={clsx("h-0.5 bg-[#76b9ed]", t.state === "active" ? "w-full" : "w-10")} />}
          </button>
        ))}
      </div>
      <div className="ml-auto flex items-center">
        <div className="w-16 text-center leading-[17px]">
          <div>40%</div>
          <div>CPU使用</div>
        </div>
        <button aria-label="显示隐藏的图标" className="ml-1.5 flex w-6 justify-center">
          <svg viewBox="0 0 12 12" className="size-3"><path d="M1 9l5-6 5 6" fill="none" stroke="#fff" strokeWidth="1.200" /></svg>
        </button>
        <svg viewBox="0 0 16 14" className="mx-1 h-[14px] w-4"><path d="M4.500 4.500h10v7h-10zM15 6.500v3M2 0v3M5 0v3M1 3h5v2L4 6v7" fill="none" stroke="#fff" strokeWidth="1.200" /><path d="M7 6.500h6v3H7z" fill="#fff" /></svg>
        <svg viewBox="0 0 14 14" className="mx-[5px] size-[14px]"><path d="M1 13C1 6 6 1 13 1M4 13c0-5 4-9 9-9M7 13c0-3.500 2.500-6 6-6" fill="none" stroke="#ddd" strokeWidth="1.300" /><circle cx="12" cy="12" r="1.600" fill="#fff" /></svg>
        <span className="w-6 text-center text-sm">中</span>
        <div className="flex w-8 justify-center">
          <svg viewBox="0 0 16 16" className="size-4"><path d="M1 2l13-2 2 13-13 3z" fill="#f0451c" /><path d="M12 4C7 2 4 4 5 6s6 1 6 4-5 2-7 1" fill="none" stroke="#fff" strokeWidth="2" /></svg>
        </div>
        <div className="w-[76px] text-center leading-[19px]">
          <div>12:34</div>
          <div>2017/6/14</div>
        </div>
        <button aria-label="通知 6" className="relative flex w-12 pl-[14px]">
          <svg viewBox="0 0 16 16" className="size-4"><path d="M0 0h15v12H7l-4 3v-3H0z" fill="#fff" /><path d="M2 3h11M2 6h11M2 9h7" stroke="#111" /></svg>
          <span className="absolute top-1 left-5 flex size-4 items-center justify-center rounded-full border border-[#888] bg-[#333] text-[11px] leading-none">6</span>
        </button>
        <div className="mr-1 h-10 w-px bg-[#555]" />
      </div>
    </footer>
  );
}

export default function App() {
  return (
    <div className="flex h-screen flex-col overflow-hidden bg-[#f0f0f0] font-['Open_Sans','Noto_Sans_CJK_SC',sans-serif] text-xs leading-4 text-black">
      <header className="relative flex h-[23px] shrink-0 items-center bg-white pl-0.5">
        <Icon name="app" />
        <h1 className="ml-[5px] whitespace-nowrap">
          <Mixed text="广联达BIM钢筋算量软件 GGJ2013 - [C:\Users\Administrator.PC-20141127NRHM\Desktop\白龙村-2017-06-12-10-02-47(2168版).GGJ12]" latin={ui} />
        </h1>
        <div className="mr-[3px] ml-auto flex">
          {[
            ["最小化", "M0 5.500h10"],
            ["还原", "M1 3.500h6.500v6.500H1zM3 3.500V1h7v7H7.500"],
            ["关闭", "M0 0l10 10M10 0L0 10"],
          ].map(([label, d]) => (
            <button key={label} aria-label={label} className="flex w-[46px] justify-center">
              <svg viewBox="0 0 10 11" className="h-[11px] w-[10px]"><path d={d} fill="none" stroke="#000" /></svg>
            </button>
          ))}
        </div>
        <div className="absolute top-[-27px] right-[211px] flex size-[46px] items-end justify-center rounded-full border-[3px] border-[#ccc] bg-[#41c55b] pb-px text-[11px] font-bold text-white shadow">73</div>
      </header>

      <nav className="flex h-[31px] shrink-0 items-center pl-[7px]">
        <div className="flex gap-[10px] whitespace-nowrap">
          {menus.map((m) => (
            <button key={m}>
              <Mixed text={m} latin={ui} />
            </button>
          ))}
        </div>
        <button className="ml-7 flex items-center gap-1 whitespace-nowrap">
          新建变更
          <Caret />
        </button>
        <Toolbar grip={false} className="mr-px ml-auto w-[187px] shrink-0 pl-7">
          <a href="#help" className="text-[#0a6b6b]">如何处理筏板附加钢筋..</a>
        </Toolbar>
        <Toolbar grip={false} className="w-[241px] shrink-0 gap-1 pl-[5px]">
          <svg viewBox="0 0 16 16" className="size-4"><rect width="16" height="16" rx="2" fill="#3f8ec3" /><path d="M5.500 6a2.500 3 0 1 1 5 0c0 2-1 3 0 3l3 2v2h-11v-2l3-2c1 0 0-1 0-3z" fill="#fff" /></svg>
          <button className="flex items-center gap-1.5">13907298339<Caret /></button>
          <span className="ml-1 whitespace-nowrap">造价豆:0</span>
          <svg viewBox="0 0 14 16" className="ml-1 h-4 w-[14px]"><path d="M1 12c2-2 1-4 2-7 .5-3 1.500-4 4-4s3.500 1 4 4c1 3 0 5 2 7zM5 13.500h4L7 15z" fill="#2b8cf2" /></svg>
          <More />
        </Toolbar>
      </nav>

      <div className="flex h-7 shrink-0 gap-0.5 pl-px">
        <Toolbar grip={false} className="w-[151px] shrink-0">
          <Tool icon="file" />
          <Tool icon="open" caret />
          <Tool icon="save" />
          <Sep />
          <Tool icon="undo" caret />
          <More />
        </Toolbar>
        <Toolbar grip={false} className="w-[548px] shrink-0">
          <Tool icon="define" label="定义" />
          <Tool icon="sigma" label="汇总计算" />
          <Tool icon="cloud" label="云检查" />
          <Tool icon="align" label="平齐板顶" off />
          <Tool icon="find" label="查找图元" />
          <Tool icon="glasses" label="查看钢筋量" />
          <Tool icon="batch" label="批量选择" />
          <More />
        </Toolbar>
        <Toolbar grip={false} className="min-w-0 flex-1">
          <Tool icon="plan" label="二维" caret />
          <Tool icon="cube" label="俯视" caret />
          <Tool icon="orbit" label="动态观察" />
          <Tool icon="local3d" label="局部三维" />
          <Sep />
          <Tool icon="full" label="全屏" />
          <Tool icon="zoom" label="缩放" caret />
          <Tool icon="pan" label="平移" caret />
          <Tool icon="rotateScreen" label="屏幕旋转" caret />
          <Sep />
          <Tool icon="floors" label="选择楼层" />
          <More />
        </Toolbar>
      </div>

      <div className="flex min-h-0 flex-1 gap-1">
        <Navigator />
        <main className="flex min-w-0 flex-1 flex-col">
          <div className="flex h-[115px] shrink-0 flex-col gap-px pt-0.5">
            <Toolbar className="mr-[83px] self-end pr-1">
              <Combo label="偏移方式" value="不偏移" className="w-[58px]" />
              <Sep />
              <span className="text-[#7a7a7a]">X=</span>
              <NumberBox label="X" value="0" className="mr-px ml-1 w-[58px]" />
              <span className="mr-1 text-[#7a7a7a]">mm</span>
              <span className="text-[#7a7a7a]">Y=</span>
              <NumberBox label="Y" value="0" className="mr-px ml-1 w-[58px]" />
              <span className="mr-0.5 text-[#7a7a7a]">mm</span>
              <Sep />
              <label className="flex items-center gap-2">
                <input type="checkbox" className="size-[11px] appearance-none border border-[#999]" />
                旋转
              </label>
              <NumberBox label="旋转角度" value="0.000" className="mr-0.5 ml-[5px] w-[68px]" />
              <span className="text-[#7a7a7a]">°</span>
            </Toolbar>
            <Toolbar className="self-start pr-px">
              <Tool icon="erase" label="删除" />
              <Sep />
              <Tool icon="copy" label="复制" />
              <Tool icon="mirror" label="镜像" />
              <Sep />
              <Tool icon="move" label="移动" />
              <Tool icon="rotate" label="旋转" />
              <Sep />
              <Tool icon="extend" label="延伸" off />
              <Tool icon="trim" label="修剪" off />
              <Sep />
              <Tool icon="breakIt" label="打断" off />
              <Tool icon="merge" label="合并" />
              <Tool icon="split" label="分割" />
              <Sep />
              <Tool icon="alignTo" label="对齐" off caret />
              <Tool icon="offset" label="偏移" />
              <Tool icon="stretch" label="拉伸" />
              <Sep />
              <Tool icon="grip" label="设置夹点" />
            </Toolbar>
            <div className="flex">
              <Toolbar className="shrink-0 pr-px">
                <Combo label="楼层" value="基础层" className="w-[58px]" />
                <Combo label="类别" value="基础" className="w-[69px]" />
                <Combo label="构件类型" value="集水坑" className="w-[69px]" />
                <Combo label="构件" value="JSK-1" className="w-[69px]" />
                <Sep />
                <Tool icon="props" label="属性" />
                <Tool icon="rebar" label="编辑钢筋" />
                <Tool icon="list" label="构件列表" />
                <Tool icon="picker" label="拾取构件" />
              </Toolbar>
              <Toolbar className="ml-0.5 w-[30px] shrink-0" />
              <Toolbar className="mr-6 ml-auto shrink-0">
                <Tool icon="twoPoint" label="两点" />
                <Tool icon="parallel" label="平行" />
                <Tool icon="pointAngle" label="点角" caret />
                <Tool icon="threePoint" label="三点辅轴" caret />
                <Tool icon="erase" label="删除辅轴" />
                <Tool icon="dimension" label="尺寸标注" caret />
              </Toolbar>
            </div>
            <Toolbar className="self-start pr-px">
              <Tool icon="select" label="选择" on />
              <button aria-label="选择方式" className="flex w-3 justify-center"><Caret /></button>
              <Sep />
              <Tool icon="point" label="点" />
              <Tool icon="rotPoint" label="旋转点" />
              <Sep />
              <Tool icon="line" label="直线" off />
              <Tool icon="arc" label="三点画弧" off caret />
              <div className="relative h-[23px] w-[58px] border border-[#777]">
                <select aria-label="画弧方式" className="size-full appearance-none" />
                <div className="pointer-events-none absolute inset-y-0 right-0.5 flex items-center"><Caret gray /></div>
              </div>
              <Tool icon="rectangle" label="矩形" off />
              <Sep />
              <Tool icon="rebarDir" label="调整钢筋方向" />
              <Tool icon="slope" label="调整集水坑放坡" />
            </Toolbar>
          </div>
          <Canvas />
          <div className="flex h-[29px] shrink-0 items-center">
            <Toolbar className="shrink-0">
              <Tool icon="ortho" label="正交" />
              <Tool icon="snap" label="对象捕捉" on />
              <Tool icon="dynInput" label="动态输入" on />
            </Toolbar>
            <Toolbar className="ml-0.5 shrink-0 pr-px">
              <Tool icon="cross" label="交点" />
              <Tool icon="perp" label="垂点" on />
              <Tool icon="mid" label="中点" on />
              <Tool icon="vertex" label="顶点" />
              <Tool icon="coord" label="坐标" />
            </Toolbar>
          </div>
        </main>
      </div>

      <div className="flex h-[22px] shrink-0 gap-0.5 border-t-2 border-white pt-px">
        {status.map(([text, width]) => (
          <div key={text} className={clsx("overflow-hidden border border-[#d5d5d5] bg-linear-to-b from-white to-[#f1f1f1] whitespace-nowrap", width)}>
            <Mixed text={text} latin={mono} />
          </div>
        ))}
      </div>
      <Taskbar />
    </div>
  );
}
